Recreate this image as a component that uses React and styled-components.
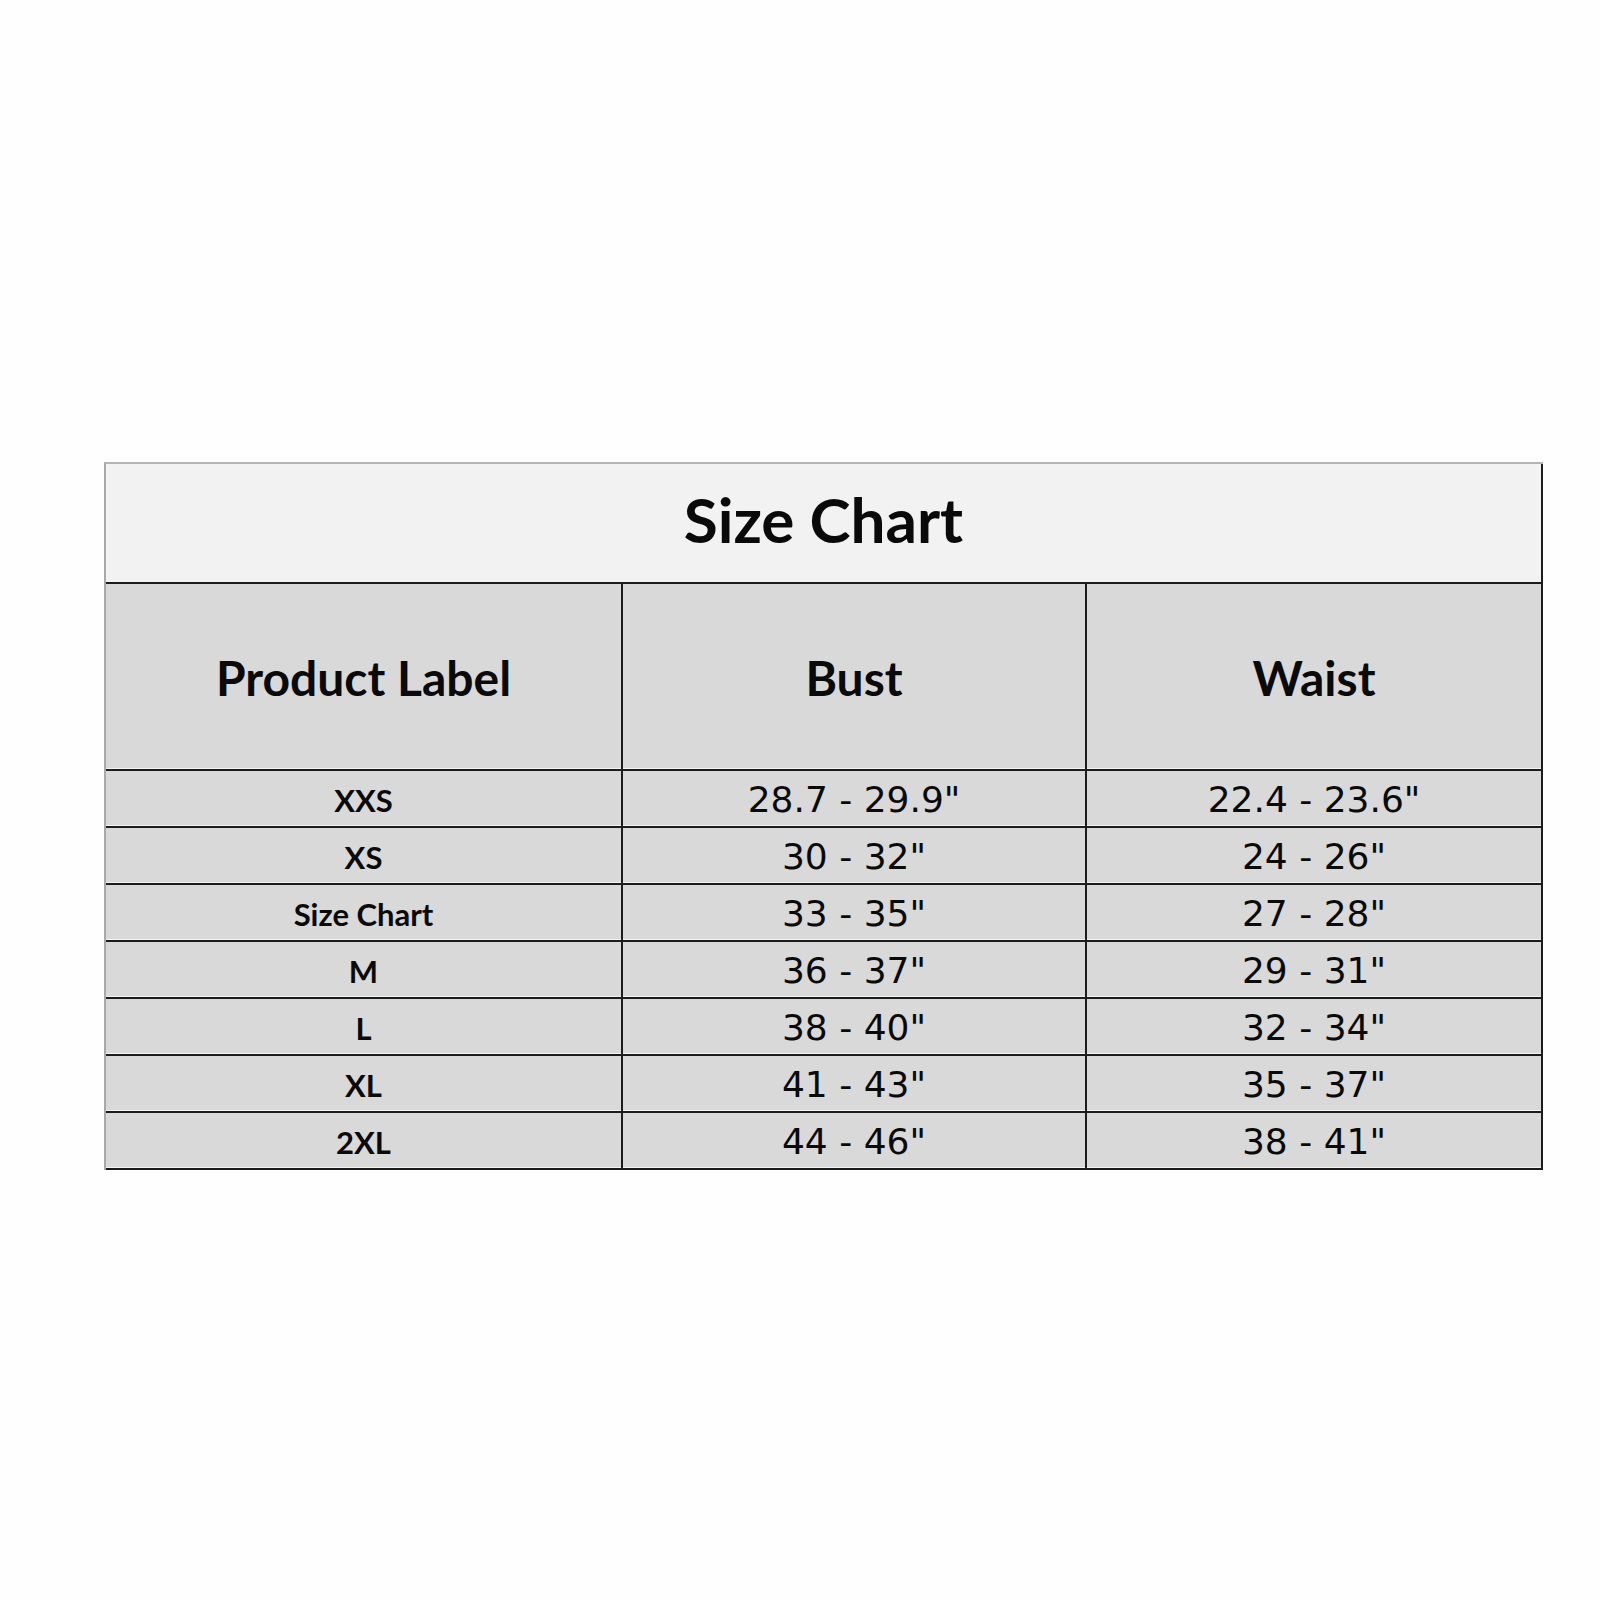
import React from 'react'
import styled, { createGlobalStyle } from 'styled-components'

const GlobalStyle = createGlobalStyle`
  html, body {
    margin: 0;
    padding: 0;
    background: #fefefe;
  }
  * { box-sizing: border-box; }
`

const Page = styled.div`
  width: 1600px;
  height: 1600px;
  padding: 462px 0 0 104px;
  background: #fefefe;
`

const Table = styled.div`
  width: 1439px;
  display: grid;
  grid-template-columns: 517px 464px 456px;
  grid-template-rows: 120px 187px repeat(7, 57px);
  border-left: 2px solid #a9a9a9;
  border-top: 2px solid #b4b4b4;
`

const Cell = styled.div`
  display: flex;
  align-items: center;
  justify-content: center;
  background: ${(p) => (p.$light ? '#f2f2f2' : '#d9d9d9')};
  border-right: 2px solid #1c1c1c;
  border-bottom: 2px solid #1c1c1c;
  box-shadow: inset 0 -1px 0 #f4f4f4;
  color: #0a0a0a;
  white-space: nowrap;
`

const TitleCell = styled(Cell)`
  grid-column: 1 / 4;
  font-family: Lato, "Open Sans", sans-serif;
  font-weight: 700;
  font-size: 62px;
  padding-bottom: 8px;
`

const HeadCell = styled(Cell)`
  font-family: Lato, "Open Sans", sans-serif;
  font-weight: 700;
  font-size: 48px;
  padding-top: 2px;
`

const LabelCell = styled(Cell)`
  font-family: Lato, "Open Sans", sans-serif;
  font-weight: 700;
  font-size: 31px;
  padding-top: 3px;
`

const ValueCell = styled(Cell)`
  font-family: "DejaVu Sans", Verdana, sans-serif;
  font-size: 36px;
  padding-top: 2px;
`

const rows = [
  ['XXS', '28.7 - 29.9"', '22.4 - 23.6"'],
  ['XS', '30 - 32"', '24 - 26"'],
  ['Size Chart', '33 - 35"', '27 - 28"'],
  ['M', '36 - 37"', '29 - 31"'],
  ['L', '38 - 40"', '32 - 34"'],
  ['XL', '41 - 43"', '35 - 37"'],
  ['2XL', '44 - 46"', '38 - 41"'],
]

const App = () => {
  return (
    <>
      <GlobalStyle />
      <Page>
        <Table>
          <TitleCell $light>Size Chart</TitleCell>
          <HeadCell>Product Label</HeadCell>
          <HeadCell>Bust</HeadCell>
          <HeadCell>Waist</HeadCell>
          {rows.map((r) => (
            <React.Fragment key={r[0]}>
              <LabelCell>{r[0]}</LabelCell>
              <ValueCell>{r[1]}</ValueCell>
              <ValueCell>{r[2]}</ValueCell>
            </React.Fragment>
          ))}
        </Table>
      </Page>
    </>
  )
}

export default App
